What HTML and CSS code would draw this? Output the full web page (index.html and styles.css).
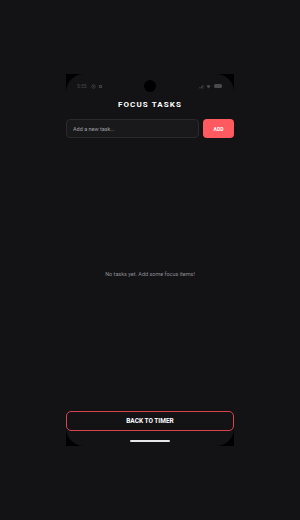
FILE: index.html
```html
<!DOCTYPE html>
<html lang="en">
<head>
    <meta charset="UTF-8">
    <meta name="viewport" content="width=device-width, initial-scale=1.0">
    <title>Focus Tasks</title>
    <link rel="stylesheet" href="styles.css">
</head>
<body>
    <div class="phone">
        <div class="screen">
            <div class="status-bar">
                <div class="status-left">
                    <span class="clock">5:55</span>
                    <svg class="st-icon" viewBox="0 0 10 10"><circle cx="5" cy="5" r="3.5" fill="none" stroke="#4a4a4e" stroke-width="1.4"/><circle cx="5" cy="5" r="1.2" fill="#4a4a4e"/></svg>
                    <svg class="st-icon" viewBox="0 0 10 10"><circle cx="5" cy="5" r="3.5" fill="#4a4a4e"/><circle cx="5" cy="5" r="1.5" fill="#131316"/></svg>
                </div>
                <div class="camera"></div>
                <div class="status-right">
                    <svg class="st-icon" viewBox="0 0 10 10"><rect x="1" y="6" width="1.6" height="3" fill="#4a4a4e"/><rect x="4" y="4" width="1.6" height="5" fill="#4a4a4e"/><rect x="7" y="2" width="1.6" height="7" fill="#4a4a4e"/></svg>
                    <svg class="st-icon" viewBox="0 0 10 10"><path d="M1 4 Q5 0 9 4 L5 9 Z" fill="#4a4a4e"/></svg>
                    <span class="battery"></span>
                </div>
            </div>

            <h1 class="title">FOCUS TASKS</h1>

            <div class="task-form">
                <input type="text" class="task-input" placeholder="Add a new task...">
                <button class="add-btn">ADD</button>
            </div>

            <div class="task-list">
                <p class="empty">No tasks yet. Add some focus items!</p>
            </div>

            <button class="back-btn">BACK TO TIMER</button>
            <div class="home-bar"></div>
        </div>
    </div>
</body>
</html>
```

FILE: styles.css
```css
:root {
    --bg-color: #131316;
    --text-color: #ffffff;
    --muted-color: #8e8e93;
    --input-bg: #19191c;
    --input-border: #2a2a2e;
    --accent: #ff5a5f;
}

body {
    margin: 0;
    height: 520px;
    background-color: var(--bg-color);
    font-family: Roboto, "Liberation Sans", sans-serif;
    color: var(--text-color);
}
/* black frame only shows in the rounded corners of the screen */
.phone {
    width: 168px;
    height: 372px;
    margin: 74px auto 0;
    background-color: #000;
}
.screen {
    height: 100%;
    background-color: var(--bg-color);
    border-radius: 18px;
    display: flex;
    flex-direction: column;
    position: relative;
}
.status-bar {
    height: 24px;
    display: flex;
    align-items: center;
    justify-content: space-between;
    padding: 0 12px 0 11px;
}
.status-left, .status-right {
    display: flex;
    align-items: center;
    gap: 2px;
}
.clock {
    font-size: 5px;
    color: #4a4a4e;
    margin-right: 2px;
}
.st-icon {
    width: 5px;
    height: 5px;
}
.battery {
    width: 8px;
    height: 4px;
    border-radius: 1.5px;
    background-color: #4a4a4e;
    margin-left: 1px;
}
.camera {
    position: absolute;
    left: 78px;
    top: 6px;
    width: 12px;
    height: 12px;
    border-radius: 50%;
    background-color: #000;
}
.title {
    margin: 2px 0 9px;
    text-align: center;
    font-size: 8px;
    font-weight: 700;
    letter-spacing: 1.1px;
    line-height: 10px;
}
.task-form {
    display: flex;
    gap: 4px;
}
.task-input {
    flex: 1;
    min-width: 0;
    height: 19px;
    box-sizing: border-box;
    padding: 0 6px;
    font-family: inherit;
    font-size: 5.5px;
    color: var(--text-color);
    background-color: var(--input-bg);
    border: 1px solid var(--input-border);
    border-radius: 4px;
    outline: none;
}
.task-input::placeholder {
    color: #a0a0a5;
}
.add-btn {
    width: 31px;
    height: 19px;
    padding: 0;
    font-family: inherit;
    font-size: 5px;
    font-weight: 700;
    color: #fff;
    background-color: var(--accent);
    border: none;
    border-radius: 4px;
}
.task-list {
    flex: 1;
    display: flex;
    align-items: center;
    justify-content: center;
}
.empty {
    margin: 0;
    font-size: 5.5px;
    color: var(--muted-color);
}
.back-btn {
    height: 20px;
    padding: 0;
    font-family: inherit;
    font-size: 6.5px;
    font-weight: 700;
    color: #fff;
    background-color: transparent;
    border: 1px solid #d9434b;
    border-radius: 5px;
}
.home-bar {
    width: 40px;
    height: 2.5px;
    margin: 9px auto 4px;
    border-radius: 2px;
    background-color: #e8e8e8;
}
```
